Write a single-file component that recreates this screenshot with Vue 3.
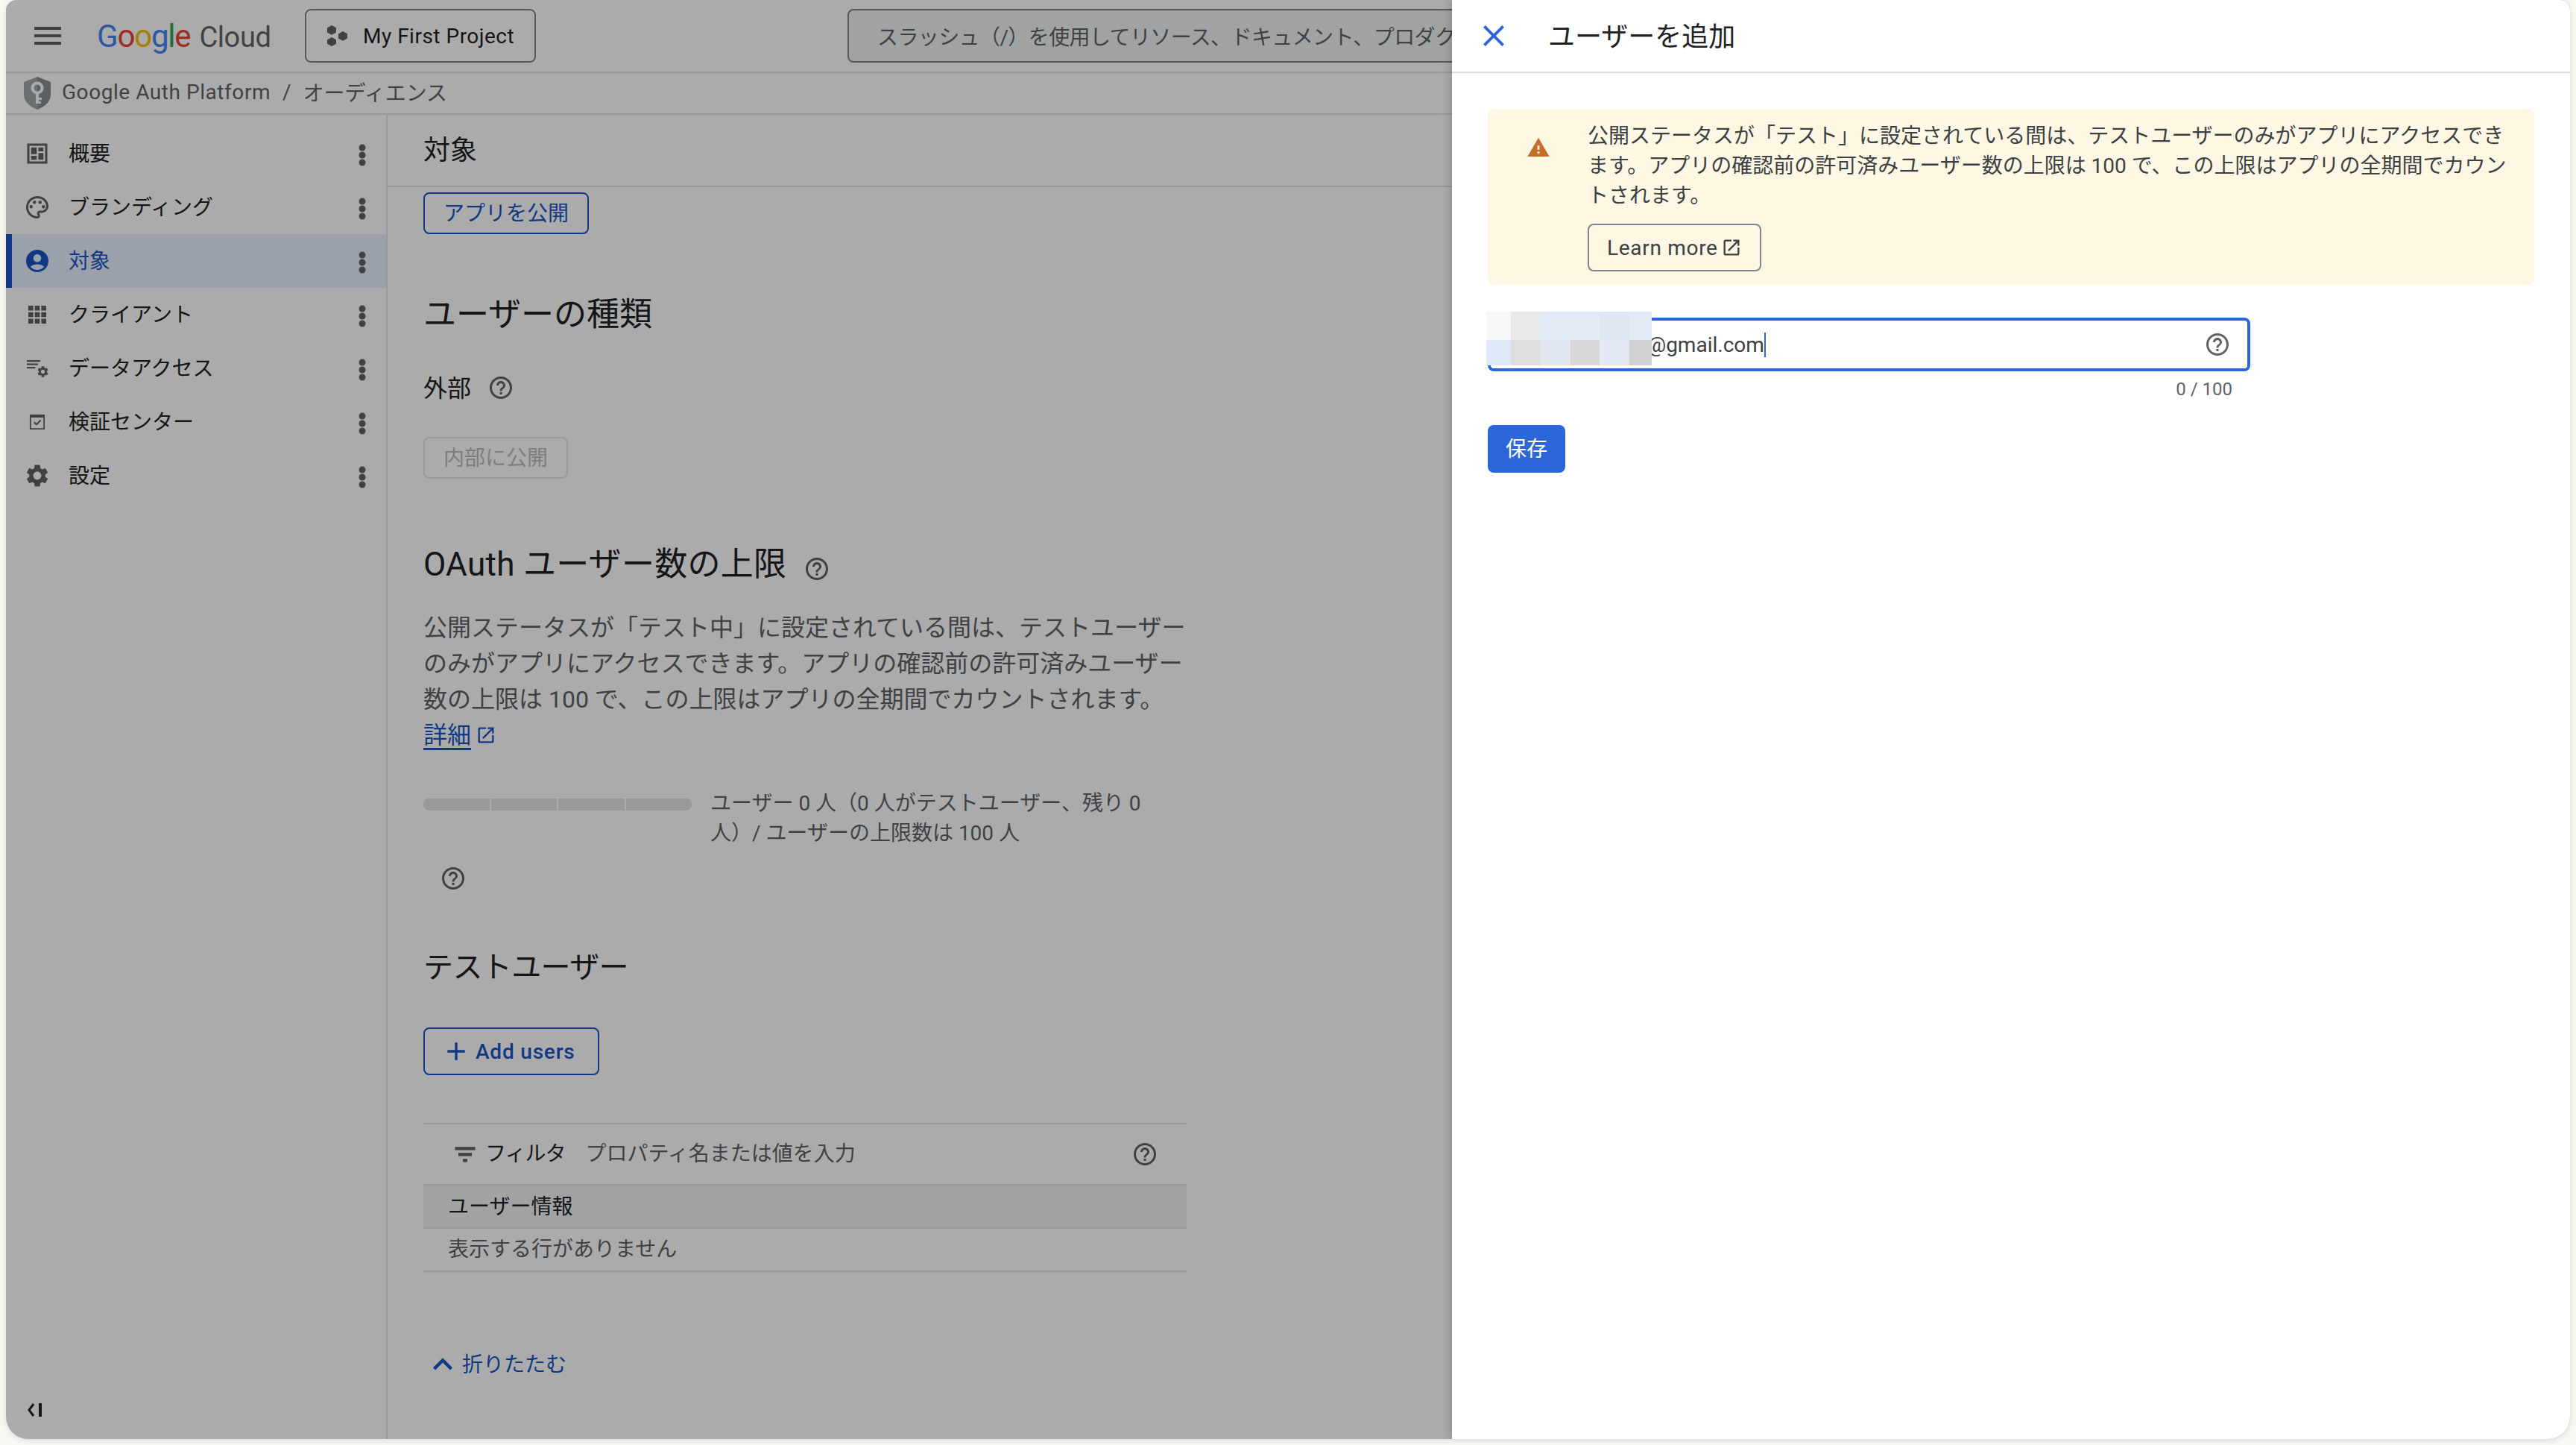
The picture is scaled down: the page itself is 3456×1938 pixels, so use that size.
<script setup>
const helpPath = "M11 18h2v-2h-2v2zm1-16C6.48 2 2 6.48 2 12s4.48 10 10 10 10-4.48 10-10S17.52 2 12 2zm0 18c-4.41 0-8-3.59-8-8s3.59-8 8-8 8 3.59 8 8-3.59 8-8 8zm0-14c-2.21 0-4 1.79-4 4h2c0-1.1.9-2 2-2s2 .9 2 2c0 2-3 1.75-3 5h2c0-2.25 3-2.5 3-5 0-2.21-1.79-4-4-4z";
const openPath = "M19 19H5V5h7V3H5c-1.11 0-2 .9-2 2v14c0 1.1.89 2 2 2h14c1.1 0 2-.9 2-2v-7h-2v7zM14 3v2h3.59l-9.83 9.83 1.41 1.41L19 6.41V10h2V3h-7z";
const gearPath = "M19.14 12.94c.04-.3.06-.61.06-.94 0-.32-.02-.64-.07-.94l2.03-1.58c.18-.14.23-.41.12-.61l-1.92-3.32c-.12-.22-.37-.29-.59-.22l-2.39.96c-.5-.38-1.03-.7-1.62-.94l-.36-2.54c-.04-.24-.24-.41-.48-.41h-3.84c-.24 0-.43.17-.47.41l-.36 2.54c-.59.24-1.13.57-1.62.94l-2.39-.96c-.22-.08-.47 0-.59.22L2.74 8.87c-.12.21-.08.47.12.61l2.03 1.58c-.05.3-.09.63-.09.94s.02.64.07.94l-2.03 1.58c-.18.14-.23.41-.12.61l1.92 3.32c.12.22.37.29.59.22l2.39-.96c.5.38 1.03.7 1.62.94l.36 2.54c.05.24.24.41.48.41h3.84c.24 0 .44-.17.47-.41l.36-2.54c.59-.24 1.13-.56 1.62-.94l2.39.96c.22.08.47 0 .59-.22l1.92-3.32c.12-.22.07-.47-.12-.61l-2.01-1.58zM12 15.6c-1.98 0-3.6-1.62-3.6-3.6s1.62-3.6 3.6-3.6 3.6 1.62 3.6 3.6-1.62 3.6-3.6 3.6z";

// 3x3 dots of the clients icon
const appsPath = [4, 9.8, 15.6]
	.flatMap((y) => [4, 9.8, 15.6].map((x) => `M${x} ${y}h4.4v4.4h-4.4z`))
	.join("");

const navItems = [
	{label: "概要", d: "M3 3h18v18H3zM5 5v14h14V5zM6.5 6.5h5v6h-5zM13 6.5h4.5v3.5H13zM13 11.5h4.5v6H13zM6.5 14h5v3.5h-5z"},
	{label: "ブランディング", d: "M12 22C6.49 22 2 17.51 2 12S6.49 2 12 2s10 4.04 10 9c0 3.31-2.69 6-6 6h-1.77c-.28 0-.5.22-.5.5 0 .12.05.23.13.33.41.47.64 1.06.64 1.67 0 1.38-1.12 2.5-2.5 2.5zm0-18c-4.41 0-8 3.59-8 8s3.59 8 8 8c.28 0 .5-.22.5-.5 0-.16-.08-.28-.14-.35-.41-.46-.63-1.05-.63-1.65 0-1.38 1.12-2.5 2.5-2.5H16c2.21 0 4-1.79 4-4 0-3.86-3.59-7-8-7zM5 11.5a1.5 1.5 0 1 0 3 0 1.5 1.5 0 1 0-3 0zM8 7.5a1.5 1.5 0 1 0 3 0 1.5 1.5 0 1 0-3 0zM13 7.5a1.5 1.5 0 1 0 3 0 1.5 1.5 0 1 0-3 0zM16 11.5a1.5 1.5 0 1 0 3 0 1.5 1.5 0 1 0-3 0z"},
	{label: "対象", active: true, d: "M12 2C6.48 2 2 6.48 2 12s4.48 10 10 10 10-4.48 10-10S17.52 2 12 2zm0 4c1.93 0 3.5 1.57 3.5 3.5S13.93 13 12 13s-3.5-1.57-3.5-3.5S10.07 6 12 6zm0 14c-2.03 0-4.43-.82-6.14-2.88C7.55 15.8 9.68 15 12 15s4.45.8 6.14 2.12C16.43 19.18 14.03 20 12 20z"},
	{label: "クライアント", d: appsPath},
	{label: "データアクセス", gear: true, d: "M2.7 4.7h12v1.5h-12zM2.7 7.7h10v1.5h-10zM2.7 10.7h7.5v1.5H2.7z"},
	{label: "検証センター", d: "M5.3 5.3h13.4v13.4H5.3zM6.5 8v9.5h11V8zM8.7 12.6l1-1 1.6 1.6 3.3-3.3 1 1-4.3 4.3z"},
	{label: "設定", d: gearPath},
];

// mosaic that hides the first part of the address
const mosaicColumns = [33, 40, 40, 39, 40, 30];
const mosaicColors = [
	"#f6f8f7", "#e8eaea", "#e2e9f7", "#e2e9f7", "#dfe6f4", "#e2e9f7",
	"#dfe8f8", "#dddfdf", "#e1e7f1", "#d8d8d8", "#e2e8f5", "#cfd0d2",
];
const mosaicTemplate = mosaicColumns.map((w) => `${w}px`).join(" ");
</script>

<template>
	<div class="page">
		<div class="window">
			<header class="topbar">
				<svg class="menu-icon" viewBox="0 0 36 24"><path d="M0 0h36v4H0zM0 10h36v4H0zM0 20h36v4H0z" /></svg>
				<div class="logo">
					<span class="g-blue">G</span><span class="g-red">o</span><span class="g-yellow">o</span><span class="g-blue">g</span><span class="g-green">l</span><span class="g-red">e</span>
					<span class="logo-cloud">Cloud</span>
				</div>
				<button class="project-btn">
					<svg class="project-icon" viewBox="0 0 28 28">
						<path d="M6 0l6 3.2v6.4l-6 3.2-6-3.2V3.2z" />
						<path d="M21 8l6 3.2v6.4l-6 3.2-6-3.2v-6.4z" />
						<path d="M6 16l6 3.2v5.6L6 28l-6-3.2v-5.6z" />
					</svg>
					My First Project
				</button>
				<div class="search">スラッシュ（/）を使用してリソース、ドキュメント、プロダク</div>
			</header>

			<div class="breadcrumb">
				<svg class="shield" viewBox="0 0 36 44">
					<path d="M18 0L36 7v17c0 9-7.500 16-18 20z" fill="#8a8e93" />
					<path d="M18 0L0 7v17c0 9 7.500 16 18 20z" fill="#a2a7ab" />
					<circle cx="18" cy="15" r="6.500" fill="none" stroke="#fff" stroke-width="4" />
					<path d="M16 21h4v15h-4zM20 28h4v3h-4zM20 33h3v3h-3z" fill="#fff" />
				</svg>
				<span class="crumb-main">Google Auth Platform</span>
				<span class="crumb-sep">/</span>
				<span>オーディエンス</span>
			</div>

			<div class="body">
				<nav class="sidebar">
					<a v-for="item in navItems" :key="item.label" class="nav-item" :class="{active: item.active}">
						<svg class="nav-icon" viewBox="0 0 24 24">
							<path fill-rule="evenodd" :d="item.d" />
							<path v-if="item.gear" :d="gearPath" transform="translate(11 9) scale(.5)" />
						</svg>
						<span class="nav-label">{{ item.label }}</span>
						<svg class="dots" viewBox="0 0 10 30"><circle cx="5" cy="5" r="4.500" /><circle cx="5" cy="15" r="4.500" /><circle cx="5" cy="25" r="4.500" /></svg>
					</a>
					<svg class="collapse-icon" viewBox="0 0 20 20">
						<path d="M8 2L2 10l6 8" fill="none" stroke="#202124" stroke-width="3" />
						<path d="M15 1h4v18h-4z" fill="#202124" />
					</svg>
				</nav>

				<main class="content">
					<div class="page-title">対象</div>
					<div class="sections">
						<button class="outline-btn">アプリを公開</button>

						<h2 class="h-type">ユーザーの種類</h2>
						<div class="type-row">
							<span class="type-label">外部</span>
							<svg class="help" viewBox="0 0 24 24"><path :d="helpPath" /></svg>
						</div>
						<button class="disabled-btn">内部に公開</button>

						<h2 class="h-limit">
							OAuth ユーザー数の上限
							<svg class="help" viewBox="0 0 24 24"><path :d="helpPath" /></svg>
						</h2>
						<p class="desc">
							公開ステータスが「テスト中」に設定されている間は、テストユーザーのみがアプリにアクセスできます。アプリの確認前の許可済みユーザー数の上限は 100 で、この上限はアプリの全期間でカウントされます。<br />
							<a class="link">詳細</a><svg class="link-icon" viewBox="0 0 24 24"><path :d="openPath" /></svg>
						</p>

						<div class="quota">
							<div class="quota-bar"><i /><i /><i /><i /></div>
							<div class="quota-text">ユーザー 0 人（0 人がテストユーザー、残り 0 人）/ ユーザーの上限数は 100 人</div>
						</div>
						<svg class="help quota-help" viewBox="0 0 24 24"><path :d="helpPath" /></svg>

						<h2 class="h-test">テストユーザー</h2>
						<button class="add-btn">
							<svg class="add-icon" viewBox="0 0 24 24"><path d="M19 13h-6v6h-2v-6H5v-2h6V5h2v6h6v2z" /></svg>
							Add users
						</button>

						<div class="table">
							<div class="filter-row">
								<svg class="filter-icon" viewBox="0 0 24 24"><path d="M3 5.500h18v2.800H3zM6 10.800h12v2.800H6zM10 16.200h4V19h-4z" /></svg>
								<span class="filter-label">フィルタ</span>
								<span class="filter-hint">プロパティ名または値を入力</span>
								<svg class="help filter-help" viewBox="0 0 24 24"><path :d="helpPath" /></svg>
							</div>
							<div class="table-head">ユーザー情報</div>
							<div class="table-empty">表示する行がありません</div>
						</div>

						<a class="collapse-link">
							<svg class="chevron" viewBox="0 0 24 24"><path d="M12 8l-6 6 1.410 1.410L12 10.830l4.590 4.580L18 14z" /></svg>
							<span class="collapse-text">折りたたむ</span>
						</a>
					</div>
				</main>
			</div>

			<div class="scrim"></div>

			<aside class="panel">
				<div class="panel-head">
					<svg class="close-icon" viewBox="0 0 24 24"><path d="M19 6.410L17.590 5 12 10.590 6.410 5 5 6.410 10.590 12 5 17.590 6.410 19 12 13.410 17.590 19 19 17.590 13.410 12z" /></svg>
					<span class="panel-title">ユーザーを追加</span>
				</div>
				<div class="panel-body">
					<div class="notice">
						<svg class="warn-icon" viewBox="0 0 24 24"><path d="M1 21h22L12 2 1 21zm12-3h-2v-2h2v2zm0-4h-2v-4h2v4z" /></svg>
						<div class="notice-main">
							<p class="notice-text">公開ステータスが「テスト」に設定されている間は、テストユーザーのみがアプリにアクセスできます。アプリの確認前の許可済みユーザー数の上限は 100 で、この上限はアプリの全期間でカウントされます。</p>
							<button class="learn-btn">
								Learn more
								<svg class="learn-icon" viewBox="0 0 24 24"><path :d="openPath" /></svg>
							</button>
						</div>
					</div>

					<div class="field">
						<span class="field-value">@gmail.com</span><span class="caret"></span>
						<svg class="help field-help" viewBox="0 0 24 24"><path :d="helpPath" /></svg>
						<div class="mosaic" :style="{gridTemplateColumns: mosaicTemplate}">
							<i v-for="(c, i) in mosaicColors" :key="i" :style="{background: c}" />
						</div>
					</div>
					<div class="counter">0 / 100</div>
					<button class="save-btn">保存</button>
				</div>
			</aside>
		</div>
	</div>
</template>

<style>
html,
body {
	margin: 0;
	background: #f8f9f2;
}
</style>

<style scoped>
* {
	box-sizing: border-box;
}

.page {
	width: 3456px;
	height: 1938px;
	padding: 0 8px 8px;
	font-family: Roboto, "Noto Sans CJK JP", sans-serif;
	font-size: 28px;
	color: #202124;
	overflow: hidden;
}

.window {
	position: relative;
	height: 100%;
	display: flex;
	flex-direction: column;
	background: #fff;
	border-radius: 14px 14px 30px 30px;
	overflow: hidden;
	box-shadow: 0 2px 8px rgba(0, 0, 0, 0.12);
}

button {
	font: inherit;
	background: none;
	cursor: pointer;
}

svg {
	flex: none;
	display: block;
}

/* top bar */
.topbar {
	height: 98px;
	flex: none;
	display: flex;
	align-items: center;
	border-bottom: 2px solid #e3e3e3;
	padding-left: 38px;
}

.menu-icon {
	width: 36px;
	height: 24px;
	fill: #5f6368;
}

.logo {
	width: 279px;
	margin-left: 48px;
	font-size: 42px;
	letter-spacing: -1.2px;
	white-space: nowrap;
}

.g-blue { color: #4285f4; }
.g-red { color: #ea4335; }
.g-yellow { color: #fbbc04; }
.g-green { color: #34a853; }

.logo-cloud {
	margin-left: 12px;
	color: #5f6368;
	font-size: 38px;
	letter-spacing: -0.4px;
}

.project-btn {
	width: 310px;
	height: 72px;
	display: flex;
	align-items: center;
	gap: 20px;
	padding: 0 0 0 28px;
	border: 2px solid #80868b;
	border-radius: 8px;
	color: #202124;
	white-space: nowrap;
	letter-spacing: 0.5px;
}

.project-icon {
	width: 28px;
	height: 28px;
	fill: #5f6368;
}

.search {
	width: 830px;
	height: 72px;
	margin-left: 418px;
	flex: none;
	display: flex;
	align-items: center;
	padding-left: 38px;
	background: #f1f3f4;
	border: 2px solid #80868b;
	border-radius: 8px;
	color: #5f6368;
	white-space: nowrap;
	letter-spacing: -0.6px;
}

/* breadcrumb */
.breadcrumb {
	height: 56px;
	flex: none;
	display: flex;
	align-items: center;
	border-bottom: 2px solid #e3e3e3;
	padding: 0 0 4px 24px;
	color: #5f6368;
}

.shield {
	width: 36px;
	height: 44px;
	margin: 4px 15px 0 0;
}

.crumb-main {
	letter-spacing: 0.55px;
}

.crumb-sep {
	margin: 0 16px 0 16px;
}

/* layout */
.body {
	flex: 1;
	min-height: 0;
	display: flex;
}

.sidebar {
	position: relative;
	width: 512px;
	flex: none;
	padding-top: 16px;
	border-right: 2px solid #e3e3e3;
}

.nav-item {
	height: 72px;
	display: flex;
	align-items: center;
	padding: 0 27px 0 16px;
	border-left: 8px solid transparent;
}

.nav-item.active {
	background: #e8f0fe;
	border-left-color: #1a56c4;
	color: #1a56c4;
}

.nav-icon {
	width: 36px;
	height: 36px;
	fill: #5f6368;
}

.nav-item.active .nav-icon {
	fill: #1a56c4;
}

.nav-label {
	flex: 1;
	margin-left: 24px;
	margin-top: -5px;
}

.dots {
	width: 10px;
	height: 30px;
	fill: #5f6368;
	margin-top: 4px;
}

.collapse-icon {
	position: absolute;
	left: 29px;
	bottom: 29px;
	width: 20px;
	height: 20px;
}

.content {
	flex: 1;
	min-width: 0;
}

.page-title {
	height: 97px;
	display: flex;
	align-items: center;
	padding: 0 0 8px 48px;
	font-size: 36px;
	border-bottom: 2px solid #e3e3e3;
}

.sections {
	width: 1072px;
	padding-left: 48px;
	display: flex;
	flex-direction: column;
	align-items: flex-start;
}

h2 {
	margin: 0;
	font-weight: 400;
}

.outline-btn {
	height: 56px;
	margin-top: 7px;
	padding: 0 25px 4px;
	border: 2px solid #1a56c4;
	border-radius: 8px;
	color: #1a56c4;
}

.h-type {
	margin-top: 80px;
	font-size: 44px;
	line-height: 56px;
}

.type-row {
	height: 40px;
	margin-top: 50px;
	display: flex;
	align-items: center;
	gap: 22px;
	font-size: 32px;
}

.type-label {
	margin-top: -4px;
}

.help {
	width: 36px;
	height: 36px;
	fill: #5f6368;
}

.disabled-btn {
	height: 56px;
	margin-top: 46px;
	padding: 0 25px 4px;
	border: 2px solid #e6e6e6;
	border-radius: 8px;
	color: #bdbdbd;
}

.h-limit {
	margin-top: 87px;
	font-size: 44px;
	line-height: 56px;
	display: flex;
	align-items: center;
	gap: 23px;
	letter-spacing: 0.3px;
}

.h-limit .help {
	margin-top: 12px;
}

.desc {
	margin: 33px 0 0;
	font-size: 32px;
	line-height: 48px;
	color: #5f6368;
}

.link {
	color: #1a56c4;
	text-decoration: underline;
	text-underline-offset: 6px;
}

.link-icon {
	display: inline-block;
	width: 28px;
	height: 28px;
	margin-left: 6px;
	vertical-align: -3px;
	fill: #1a56c4;
}

.quota {
	margin-top: 48px;
	display: flex;
	gap: 25px;
}

.quota-bar {
	width: 360px;
	height: 16px;
	flex: none;
	margin-top: 13px;
	display: grid;
	grid-template-columns: repeat(4, 1fr);
	gap: 2px;
	background: #fff;
	border-radius: 8px;
	overflow: hidden;
}

.quota-bar i {
	background: #e4e4e4;
}

.quota-text {
	line-height: 40px;
	color: #5f6368;
}

.quota-help {
	margin: 22px 0 0 22px;
}

.h-test {
	margin-top: 76px;
	font-size: 40px;
	line-height: 52px;
	letter-spacing: -0.6px;
}

.add-btn {
	height: 64px;
	margin-top: 54px;
	padding: 0 30px 0 22px;
	display: flex;
	align-items: center;
	gap: 6px;
	border: 2px solid #1a56c4;
	border-radius: 8px;
	color: #1a56c4;
	font-weight: 500;
	letter-spacing: 0.8px;
}

.add-icon {
	width: 40px;
	height: 40px;
	fill: #1a56c4;
}

.table {
	width: 100%;
	margin-top: 64px;
	border-top: 2px solid #e3e3e3;
}

.filter-row {
	height: 82px;
	display: flex;
	align-items: center;
	padding: 0 38px;
	border-bottom: 2px solid #e3e3e3;
}

.filter-icon {
	width: 36px;
	height: 36px;
	fill: #5f6368;
}

.filter-label {
	margin-left: 9px;
	margin-top: -6px;
	letter-spacing: -1px;
}

.filter-hint {
	margin-left: 27px;
	margin-top: -6px;
	color: #5f6368;
}

.filter-help {
	margin-left: auto;
}

.table-head {
	height: 58px;
	display: flex;
	align-items: center;
	padding: 0 33px 4px;
	background: #f1f3f4;
	border-bottom: 2px solid #e3e3e3;
}

.table-empty {
	height: 58px;
	display: flex;
	align-items: center;
	padding: 0 33px 6px;
	border-bottom: 2px solid #e3e3e3;
	color: #5f6368;
}

.collapse-link {
	height: 44px;
	margin-top: 102px;
	display: flex;
	align-items: center;
	color: #1a56c4;
}

.collapse-text {
	margin-top: -4px;
}

.chevron {
	width: 52px;
	height: 52px;
	fill: #1a56c4;
}

/* dim layer and side panel */
.scrim {
	position: absolute;
	inset: 0;
	background: rgba(0, 0, 0, 0.33);
}

.panel {
	position: absolute;
	top: 0;
	right: 0;
	bottom: 0;
	width: 1500px;
	display: flex;
	flex-direction: column;
	background: #fff;
	box-shadow: -4px 0 10px rgba(0, 0, 0, 0.14);
}

.panel-head {
	height: 98px;
	flex: none;
	display: flex;
	align-items: center;
	padding-left: 32px;
	border-bottom: 2px solid #dadce0;
}

.close-icon {
	width: 48px;
	height: 48px;
	fill: #2d66d8;
}

.panel-title {
	margin: -4px 0 0 49px;
	font-size: 36px;
}

.panel-body {
	padding: 48px 48px 0;
}

.notice {
	height: 236px;
	display: flex;
	padding: 17px 0 0 52px;
	background: #fef7e3;
	border-radius: 8px;
}

.warn-icon {
	width: 32px;
	height: 32px;
	margin-top: 19px;
	fill: #c5702a;
}

.notice-main {
	width: 1240px;
	margin-left: 50px;
}

.notice-text {
	margin: 0;
	line-height: 40px;
	color: #3c4043;
}

.learn-btn {
	height: 64px;
	margin-top: 17px;
	padding: 0 24px;
	display: flex;
	align-items: center;
	gap: 4px;
	border: 2px solid #80868b;
	border-radius: 8px;
	color: #3c4043;
	letter-spacing: 0.7px;
}

.learn-icon {
	width: 28px;
	height: 28px;
	fill: #3c4043;
}

.field {
	position: relative;
	width: 1023px;
	height: 72px;
	margin-top: 44px;
	display: flex;
	align-items: center;
	padding: 0 22px 0 210px;
	border: 4px solid #2d66d8;
	border-radius: 8px;
	color: #3c4043;
}

.caret {
	width: 2px;
	height: 33px;
	background: #2d66d8;
}

.field-help {
	margin-left: auto;
}

.mosaic {
	position: absolute;
	left: -6px;
	top: -12px;
	height: 72px;
	display: grid;
	grid-template-rows: 38px 34px;
}

.counter {
	width: 999px;
	margin-top: 8px;
	line-height: 32px;
	font-size: 24px;
	color: #5f6368;
	text-align: right;
}

.save-btn {
	width: 104px;
	height: 64px;
	margin-top: 32px;
	padding: 0 0 4px;
	border: 0;
	border-radius: 8px;
	background: #2d66d8;
	color: #fff;
}
</style>
